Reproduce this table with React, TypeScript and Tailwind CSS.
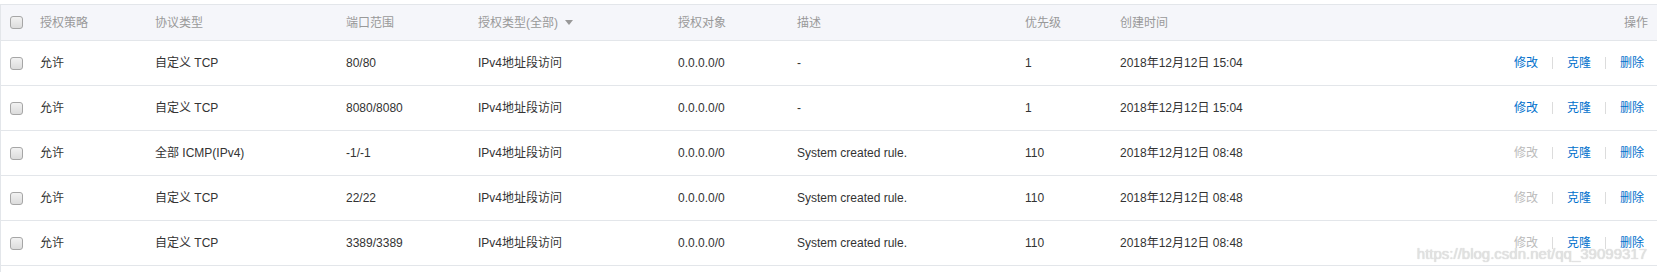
import React from "react";

type Rule = {
  policy: string;
  protocol: string;
  ports: string;
  authType: string;
  target: string;
  desc: string;
  priority: string;
  created: string;
  editable: boolean;
};

const RULES: Rule[] = [
  { policy: "允许", protocol: "自定义 TCP", ports: "80/80", authType: "IPv4地址段访问", target: "0.0.0.0/0", desc: "-", priority: "1", created: "2018年12月12日 15:04", editable: true },
  { policy: "允许", protocol: "自定义 TCP", ports: "8080/8080", authType: "IPv4地址段访问", target: "0.0.0.0/0", desc: "-", priority: "1", created: "2018年12月12日 15:04", editable: true },
  { policy: "允许", protocol: "全部 ICMP(IPv4)", ports: "-1/-1", authType: "IPv4地址段访问", target: "0.0.0.0/0", desc: "System created rule.", priority: "110", created: "2018年12月12日 08:48", editable: false },
  { policy: "允许", protocol: "自定义 TCP", ports: "22/22", authType: "IPv4地址段访问", target: "0.0.0.0/0", desc: "System created rule.", priority: "110", created: "2018年12月12日 08:48", editable: false },
  { policy: "允许", protocol: "自定义 TCP", ports: "3389/3389", authType: "IPv4地址段访问", target: "0.0.0.0/0", desc: "System created rule.", priority: "110", created: "2018年12月12日 08:48", editable: false },
];

const GRID =
  "grid grid-cols-[39px_115px_191px_132px_200px_119px_228px_95px_1fr_auto] items-center";

function Checkbox() {
  return (
    <span className="block h-[13px] w-[13px] rounded-[3px] border border-[#a6a6a6] bg-linear-to-b from-[#f2f2f2] to-[#dcdcdc]" />
  );
}

function Sep() {
  return <span className="mx-[14px] block h-[12px] w-px bg-[#dcdcdc]" />;
}

export default function App() {
  return (
    <div
      className="relative h-[272px] overflow-hidden bg-white pt-1 text-[12px] text-[#333]"
      style={{ fontFamily: '"Liberation Sans", "Noto Sans CJK SC", sans-serif' }}
    >
      <div className="border-l border-[#e3e6ea]">
        {/* header */}
        <div className={`${GRID} h-[37px] border-y border-[#e3e6ea] bg-[#f5f6fa] text-[#999]`}>
          <div className="pl-[9px]">
            <Checkbox />
          </div>
          <div>授权策略</div>
          <div>协议类型</div>
          <div>端口范围</div>
          <div className="flex items-center">
            授权类型(全部)
            <svg className="ml-[7px]" width="8" height="5" viewBox="0 0 8 5">
              <path d="M0 0h8L4 5z" fill="#999" />
            </svg>
          </div>
          <div>授权对象</div>
          <div>描述</div>
          <div>优先级</div>
          <div>创建时间</div>
          <div className="pr-[9px] text-right">操作</div>
        </div>

        {RULES.map((r, i) => (
          <div key={i} className={`${GRID} h-[45px] border-b border-[#e3e6ea]`}>
            <div className="pl-[9px]">
              <Checkbox />
            </div>
            <div>{r.policy}</div>
            <div>{r.protocol}</div>
            <div>{r.ports}</div>
            <div>{r.authType}</div>
            <div>{r.target}</div>
            <div>{r.desc}</div>
            <div>{r.priority}</div>
            <div>{r.created}</div>
            <div className="flex items-center pr-[13px]">
              <span className={r.editable ? "text-[#0070cc]" : "text-[#bbb]"}>修改</span>
              <Sep />
              <span className="text-[#0070cc]">克隆</span>
              <Sep />
              <span className="text-[#0070cc]">删除</span>
            </div>
          </div>
        ))}

        <div className="h-[10px]" />
      </div>

      {/* csdn watermark */}
      <div
        className="absolute right-[10px] top-[246px] text-[15px] leading-4 text-[#e2e2e2] [text-shadow:0_0_1px_#c8c8c8]"
        style={{ fontFamily: '"Liberation Sans", sans-serif' }}
      >
        https://blog.csdn.net/qq_39099317
      </div>
    </div>
  );
}
